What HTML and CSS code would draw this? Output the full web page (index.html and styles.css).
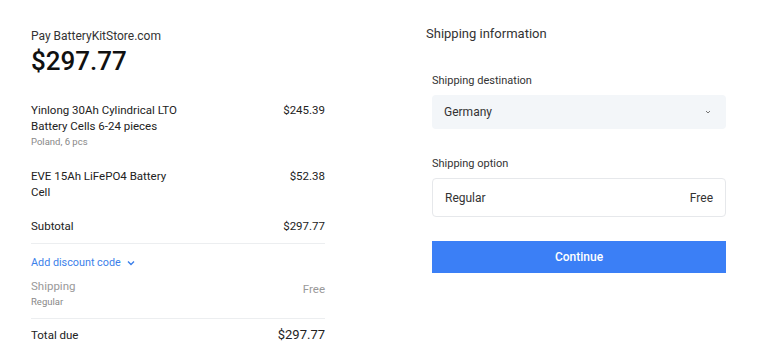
FILE: index.html
```html
<!DOCTYPE html>
<html lang="en">
<head>
    <meta charset="UTF-8">
    <meta name="viewport" content="width=device-width, initial-scale=1.0">
    <title>Pay BatteryKitStore.com</title>
    <link rel="stylesheet" href="styles.css">
</head>
<body>
    <div id="checkout">
        <div id="resumo">
            <div class="loja">Pay BatteryKitStore.com</div>
            <div class="valor">$297.77</div>

            <div class="item">
                <div class="item-info">
                    <div class="item-nome">Yinlong 30Ah Cylindrical LTO Battery Cells 6-24 pieces</div>
                    <div class="item-detalhe">Poland, 6 pcs</div>
                </div>
                <div class="item-preco">$245.39</div>
            </div>

            <div class="item">
                <div class="item-info">
                    <div class="item-nome">EVE 15Ah LiFePO4 Battery Cell</div>
                </div>
                <div class="item-preco">$52.38</div>
            </div>

            <div class="linha subtotal">
                <span>Subtotal</span>
                <span>$297.77</span>
            </div>

            <a class="desconto">Add discount code
                <svg width="10" height="10" viewBox="0 0 10 10"><path d="M2 3.5l3 3 3-3" fill="none" stroke="currentColor" stroke-width="1.4"/></svg>
            </a>

            <div class="linha envio">
                <div>
                    <div class="envio-nome">Shipping</div>
                    <div class="item-detalhe">Regular</div>
                </div>
                <span class="envio-preco">Free</span>
            </div>

            <div class="linha total">
                <span>Total due</span>
                <span class="total-valor">$297.77</span>
            </div>
        </div>

        <div id="formulario">
            <h2 class="titulo">Shipping information</h2>
            <div class="campos">
                <label class="rotulo">Shipping destination</label>
                <div class="selecao">
                    <span>Germany</span>
                    <svg width="8" height="8" viewBox="0 0 8 8"><path d="M2 3l2 2 2-2" fill="none" stroke="#777" stroke-width="1"/></svg>
                </div>

                <label class="rotulo">Shipping option</label>
                <div class="opcao">
                    <span>Regular</span>
                    <span>Free</span>
                </div>

                <button class="continuar">Continue</button>
            </div>
        </div>
    </div>
</body>
</html>
```

FILE: styles.css
```css
* {
    box-sizing: border-box;
}

body {
    margin: 0;
    font-family: Roboto, "Liberation Sans", Arial, sans-serif;
    color: #1a1a1a;
    background: #fff;
}

#checkout {
    display: flex;
    padding: 28px 0 0 31px;
}

#resumo {
    width: 294px;
    font-size: 11.5px;
    color: #222;
}

.loja {
    font-size: 12px;
    line-height: 16px;
    color: #333;
}

.valor {
    font-size: 26px;
    font-weight: 500;
    line-height: 30px;
    color: #111;
    margin: 2px 0 26px;
}

.item {
    display: flex;
    justify-content: space-between;
    margin-bottom: 19px;
}

.item-info {
    width: 150px;
}

.item-nome {
    line-height: 16px;
}

.item-detalhe {
    font-size: 9.5px;
    line-height: 15px;
    color: #888;
}

.item-preco {
    line-height: 16px;
}

.linha {
    display: flex;
    justify-content: space-between;
    align-items: center;
    border-bottom: 1px solid #eceef0;
    padding: 10px 0;
}

.subtotal {
    margin-top: -1px;
    padding: 0 0 9px;
    line-height: 16px;
}

.desconto {
    display: flex;
    align-items: center;
    gap: 5px;
    color: #3b7fea;
    font-size: 10.8px;
    line-height: 16px;
    padding: 11px 0 0;
}

.envio {
    color: #999;
    padding: 7px 0 9px;
    align-items: flex-start;
}

.envio-nome {
    line-height: 16px;
}

.envio-preco {
    margin-top: 3px;
    line-height: 16px;
}

.total {
    border-bottom: none;
    padding-top: 8px;
}

.total-valor {
    font-size: 13px;
    color: #222;
}

#formulario {
    margin-left: 101px;
    width: 300px;
}

.titulo {
    margin: 0;
    font-size: 13px;
    font-weight: 400;
    line-height: 12px;
    color: #333;
}

.campos {
    padding: 34px 0 0 6px;
    display: flex;
    flex-direction: column;
}

.rotulo {
    font-size: 11px;
    line-height: 14px;
    color: #333;
    margin-bottom: 7px;
}

.selecao, .opcao {
    display: flex;
    justify-content: space-between;
    align-items: center;
    font-size: 12px;
    color: #333;
    border-radius: 4px;
}

.selecao {
    height: 34px;
    background: #f3f6f9;
    padding: 0 14px 0 12px;
    margin-bottom: 28px;
}

.opcao {
    height: 39px;
    border: 1px solid #e6e8eb;
    padding: 0 12px;
    margin-bottom: 24px;
}

.continuar {
    height: 32px;
    border: none;
    background: #3b7ff6;
    color: #fff;
    font-family: inherit;
    font-size: 12px;
    font-weight: 500;
}
```
